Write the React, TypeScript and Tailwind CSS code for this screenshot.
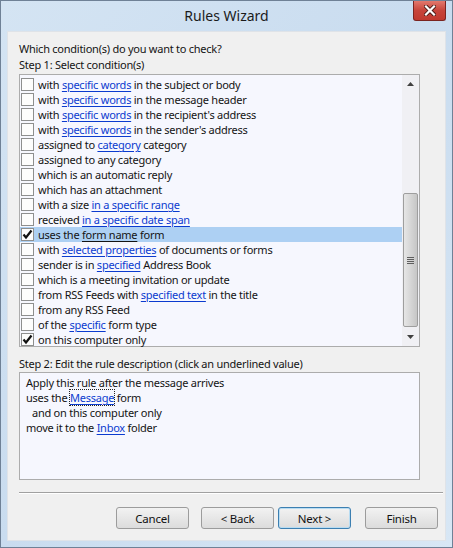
import type { ReactNode } from 'react';

type Cond = { parts: ReactNode; checked?: boolean; selected?: boolean };

function L({ children }: { children: ReactNode }) {
  return <span className="text-[#0b3bcf] underline underline-offset-[2px]">{children}</span>;
}

const conditions: Cond[] = [
  { parts: <>with <L>specific words</L> in the subject or body</> },
  { parts: <>with <L>specific words</L> in the message header</> },
  { parts: <>with <L>specific words</L> in the recipient's address</> },
  { parts: <>with <L>specific words</L> in the sender's address</> },
  { parts: <>assigned to <L>category</L> category</> },
  { parts: <>assigned to any category</> },
  { parts: <>which is an automatic reply</> },
  { parts: <>which has an attachment</> },
  { parts: <>with a size <L>in a specific range</L></> },
  { parts: <>received <L>in a specific date span</L></> },
  {
    parts: (
      <>
        uses the <span className="underline underline-offset-[2px]">form name</span> form
      </>
    ),
    checked: true,
    selected: true,
  },
  { parts: <>with <L>selected properties</L> of documents or forms</> },
  { parts: <>sender is in <L>specified</L> Address Book</> },
  { parts: <>which is a meeting invitation or update</> },
  { parts: <>from RSS Feeds with <L>specified text</L> in the title</> },
  { parts: <>from any RSS Feed</> },
  { parts: <>of the <L>specific</L> form type</> },
  { parts: <>on this computer only</>, checked: true },
];

function CheckBox({ checked }: { checked?: boolean }) {
  return (
    <span className="w-[13px] h-[13px] shrink-0 border border-[#8e8f8f] bg-[#fdfdfd] flex items-center justify-center">
      {checked && (
        <svg width="11" height="11" viewBox="0 0 11 11">
          <path d="M1.5 5.5 L4 8.5 L9.5 1.5" fill="none" stroke="#111" strokeWidth="2.2" />
        </svg>
      )}
    </span>
  );
}

function WinButton({ label, isDefault }: { label: string; isDefault?: boolean }) {
  return (
    <button
      className={`w-[73px] h-[22px] rounded-[3px] border text-[11.5px] leading-[15px] text-[#111] bg-gradient-to-b from-[#f2f2f2] to-[#dcdcdc] ${
        isDefault ? 'border-[#3c7fb1] shadow-[inset_0_0_0_1px_#b8dcf2]' : 'border-[#9c9c9c]'
      }`}
    >
      {label}
    </button>
  );
}

function ScrollBar() {
  return (
    <div className="w-[17px] bg-[#f0f0f4] flex flex-col items-center">
      <div className="h-[17px] w-full flex items-center justify-center">
        <svg width="7" height="4" viewBox="0 0 7 4">
          <path d="M0 4 L3.5 0 L7 4 Z" fill="#404040" />
        </svg>
      </div>
      <div className="h-[101px]" />
      <div className="w-[15px] h-[134px] rounded-[2px] border border-[#9e9e9e] bg-gradient-to-r from-[#e6e6e6] via-[#d6d6d6] to-[#c6c6c6] flex items-center justify-center">
        <div className="flex flex-col gap-[1px] w-[7px]">
          <div className="h-[1px] bg-[#5e5e5e]" />
          <div className="h-[1px] bg-[#5e5e5e]" />
          <div className="h-[1px] bg-[#5e5e5e]" />
          <div className="h-[1px] bg-[#5e5e5e]" />
        </div>
      </div>
      <div className="flex-1 w-full flex items-center justify-center">
        <svg width="7" height="4" viewBox="0 0 7 4">
          <path d="M0 0 L3.5 4 L7 0 Z" fill="#404040" />
        </svg>
      </div>
    </div>
  );
}

export default function App() {
  return (
    <div className="w-[453px] h-[548px] border border-[#6f8196] bg-gradient-to-br from-[#d4e4f3] via-[#c9dcef] to-[#d8e7f5] font-['Noto_Sans',sans-serif] text-[#141414] flex flex-col overflow-hidden">
      {/* title bar */}
      <div className="h-[30px] grid grid-cols-[1fr_auto_1fr] items-start">
        <div />
        <div className="pt-[6px] text-[14px] leading-[18px] text-[#1b1b1b]">Rules Wizard</div>
        <div className="flex justify-end pr-[6px]">
          <div className="w-[33px] h-[20px] rounded-b-[3px] border border-t-0 border-[#7a2420] bg-gradient-to-b from-[#e3786d] via-[#c7443a] to-[#c0392f] flex items-center justify-center">
            <svg width="12" height="11" viewBox="0 0 12 11">
              <path d="M2 1.5 L10 9.5 M10 1.5 L2 9.5" stroke="#4a1a16" strokeWidth="4" strokeLinecap="square" />
              <path d="M2 1.5 L10 9.5 M10 1.5 L2 9.5" stroke="#ffffff" strokeWidth="2.2" strokeLinecap="square" />
            </svg>
          </div>
        </div>
      </div>

      {/* client area */}
      <div className="mx-[6px] h-[510px] bg-[#f0f0f0] border border-[#dfe3e8] text-[11px] tracking-[-0.25px] leading-[15px] flex flex-col">
        <div className="pl-[11px] pt-[9px]">Which condition(s) do you want to check?</div>
        <div className="pl-[11px] pt-[1px]">Step 1: Select condition(s)</div>

        <div className="ml-[11px] mt-[2px] w-[401px] h-[273px] border border-[#acacac] bg-[#f6f7fe] flex">
          <div className="flex-1 pt-[2px]">
            {conditions.map((c, i) => (
              <div
                key={i}
                className={`h-[15px] flex items-center gap-[4px] pl-[1px] whitespace-nowrap ${
                  c.selected ? 'bg-[#add0f3]' : ''
                }`}
              >
                <CheckBox checked={c.checked} />
                <span>{c.parts}</span>
              </div>
            ))}
          </div>
          <ScrollBar />
        </div>

        <div className="pl-[11px] pt-[9px]">Step 2: Edit the rule description (click an underlined value)</div>
        <div className="ml-[11px] mt-[1px] w-[401px] h-[108px] border border-[#acacac] bg-[#f6f7fe] pl-[6px] pt-[2px]">
          <div>Apply this rule after the message arrives</div>
          <div>
            uses the{' '}
            <span className="outline outline-1 outline-dotted outline-[#222] text-[#0b3bcf] underline underline-offset-[2px]">
              Message
            </span>{' '}
            form
          </div>
          <div className="pl-[6px]">and on this computer only</div>
          <div>
            move it to the <L>Inbox</L> folder
          </div>
        </div>

        <div className="ml-[11px] mr-[2px] mt-[12px] h-[2px] border-t border-[#a0a0a0] border-b-white border-b" />

        <div className="mt-[13px] flex pl-[108px] gap-[12px]">
          <WinButton label="Cancel" />
          <div className="flex gap-[4px]">
            <WinButton label="< Back" />
            <WinButton label="Next >" isDefault />
          </div>
          <div className="ml-[2px]">
            <WinButton label="Finish" />
          </div>
        </div>
      </div>
    </div>
  );
}
